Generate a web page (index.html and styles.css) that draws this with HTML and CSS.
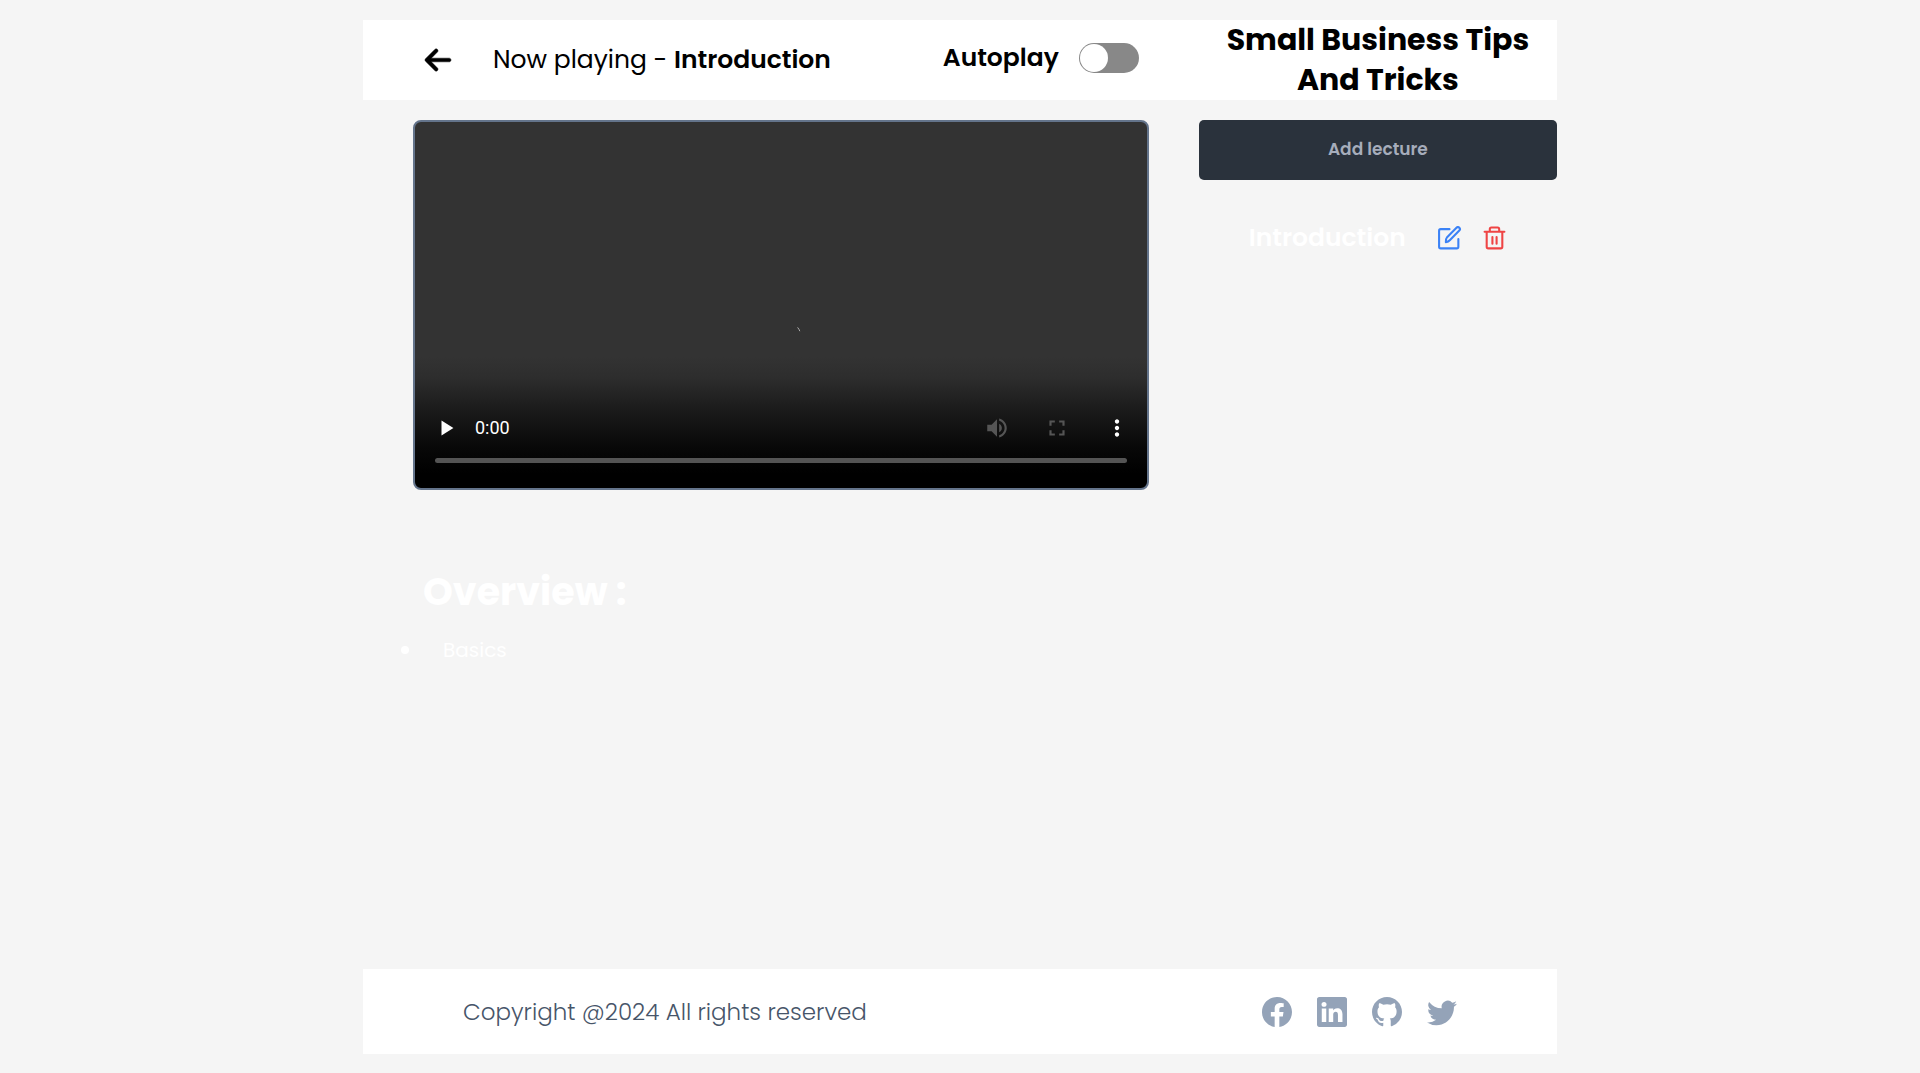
FILE: index.html
```html
<!DOCTYPE html>
<html lang="en">
<head>
<meta charset="utf-8">
<meta name="viewport" content="width=device-width, initial-scale=1">
<title>Small Business Tips And Tricks</title>
<link rel="stylesheet" href="styles.css">
</head>
<body>
<div class="page">
  <header class="header">
    <div class="header-main">
      <button class="icon-button back" type="button" aria-label="Back">
        <svg viewBox="0 0 448 512" width="26" height="30" fill="currentColor" stroke="currentColor" stroke-width="8" overflow="visible"><path d="M9.4 233.4c-12.5 12.5-12.5 32.8 0 45.3l160 160c12.5 12.5 32.8 12.5 45.3 0s12.5-32.8 0-45.3L109.2 288 416 288c17.7 0 32-14.3 32-32s-14.3-32-32-32l-306.7 0L214.6 118.6c12.5-12.5 12.5-32.8 0-45.3s-32.8-12.5-45.3 0l-160 160z"/></svg>
      </button>
      <p class="now-playing">Now playing - <strong>Introduction</strong></p>
      <div class="autoplay">
        <label for="autoplay">Autoplay</label>
        <input class="toggle" type="checkbox" id="autoplay">
      </div>
    </div>
    <h1 class="course-title">Small Business Tips And Tricks</h1>
  </header>

  <main class="content">
    <section class="lecture">
      <div class="player">
        <svg class="spinner" viewBox="0 0 4 5" width="4" height="5"><path d="M.6.4 2 2.4l.8 1.8" fill="none" stroke="#ccc" stroke-width=".8"/></svg>
        <div class="controls">
          <button class="icon-button" type="button" aria-label="Play">
            <svg viewBox="0 0 24 24" width="26" height="26" fill="currentColor"><path d="M6 5v14l11-7z"/></svg>
          </button>
          <span class="time">0:00</span>
          <button class="icon-button" type="button" aria-label="Mute" disabled>
            <svg viewBox="0 0 24 24" width="26" height="26" fill="currentColor"><path d="M3 9v6h4l5 5V4L7 9H3zm13.5 3c0-1.77-1.02-3.29-2.5-4.03v8.05c1.48-.73 2.5-2.25 2.5-4.02zM14 3.23v2.06c2.89.86 5 3.54 5 6.71s-2.11 5.85-5 6.71v2.06c4.01-.91 7-4.49 7-8.77s-2.99-7.86-7-8.77z"/></svg>
          </button>
          <button class="icon-button" type="button" aria-label="Full screen" disabled>
            <svg viewBox="0 0 24 24" width="26" height="26" fill="currentColor"><path d="M7 14H5v5h5v-2H7v-3zm-2-4h2V7h3V5H5v5zm12 7h-3v2h5v-5h-2v3zM14 5v2h3v3h2V5h-5z"/></svg>
          </button>
          <button class="icon-button" type="button" aria-label="More options">
            <svg viewBox="0 0 24 24" width="26" height="26" fill="currentColor"><path d="M12 8c1.1 0 2-.9 2-2s-.9-2-2-2-2 .9-2 2 .9 2 2 2zm0 2c-1.1 0-2 .9-2 2s.9 2 2 2 2-.9 2-2-.9-2-2-2zm0 6c-1.1 0-2 .9-2 2s.9 2 2 2 2-.9 2-2-.9-2-2-2z"/></svg>
          </button>
        </div>
        <input class="seek" type="range" min="0" max="100" value="0" aria-label="Seek" disabled>
      </div>
      <h2 class="overview-title">Overview :</h2>
      <ul class="overview-list">
        <li>Basics</li>
      </ul>
    </section>

    <aside class="lectures">
      <button class="add-lecture" type="button">Add lecture</button>
      <div class="lecture-row">
        <span class="lecture-name">Introduction</span>
        <button class="icon-button edit" type="button" aria-label="Edit lecture">
          <svg viewBox="0 0 24 24" width="25" height="25" fill="none" stroke="currentColor" stroke-width="2" stroke-linecap="round" stroke-linejoin="round"><path d="M12 3H3.500A1.500 1.500 0 0 0 2 4.500v15.500A1.500 1.500 0 0 0 3.500 21.500h15.500a1.500 1.500 0 0 0 1.500-1.500V12.500"/><path d="M8.500 15.500c0-2 0-3.500 1.200-4.800L18.700 1.700a1.900 1.900 0 0 1 2.700 2.700L12.500 13.500c-1.200 1.300-2.200 1.800-4 2z"/></svg>
        </button>
        <button class="icon-button delete" type="button" aria-label="Delete lecture">
          <svg viewBox="0 0 24 24" width="25" height="25" fill="none" stroke="currentColor" stroke-width="2" stroke-linecap="round" stroke-linejoin="round"><path d="M2.500 5.500h19M4.500 5.500v14.500A1.500 1.500 0 0 0 6 21.500h12a1.500 1.500 0 0 0 1.500-1.500V5.500M7.500 5.500V3A1.500 1.500 0 0 1 9 1.500h6a1.500 1.500 0 0 1 1.500 1.500V5.500M10 10.500v6.500M14 10.500v6.500"/></svg>
        </button>
      </div>
    </aside>
  </main>

  <footer class="footer">
    <p class="copyright">Copyright @2024 All rights reserved</p>
    <nav class="social" aria-label="Social">
      <a href="#" aria-label="Facebook"><svg viewBox="0 0 16 16" width="30" height="30" fill="currentColor"><path d="M16 8.049c0-4.446-3.582-8.050-8-8.050C3.580 0-.002 3.603-.002 8.050c0 4.017 2.926 7.347 6.750 7.951v-5.625h-2.030V8.050H6.750V6.275c0-2.017 1.195-3.131 3.022-3.131.876 0 1.791.157 1.791.157v1.980h-1.009c-.993 0-1.303.621-1.303 1.258v1.510h2.218l-.354 2.326H9.250V16c3.824-.604 6.750-3.934 6.750-7.951z"/></svg></a>
      <a href="#" aria-label="LinkedIn"><svg viewBox="0 0 16 16" width="30" height="30" fill="currentColor"><path d="M0 1.146C0 .513.526 0 1.175 0h13.650C15.474 0 16 .513 16 1.146v13.708c0 .633-.526 1.146-1.175 1.146H1.175C.526 16 0 15.487 0 14.854V1.146zm4.943 12.248V6.169H2.542v7.225h2.401zm-1.200-8.212c.837 0 1.358-.554 1.358-1.248-.015-.709-.520-1.248-1.342-1.248-.822 0-1.359.540-1.359 1.248 0 .694.521 1.248 1.327 1.248h.016zm4.908 8.212V9.359c0-.216.016-.432.080-.586.173-.431.568-.878 1.232-.878.869 0 1.216.662 1.216 1.634v3.865h2.401V9.250c0-2.220-1.184-3.252-2.764-3.252-1.274 0-1.845.700-2.165 1.193v.025h-.016a5.540 5.540 0 0 1 .016-.025V6.169h-2.400c.030.678 0 7.225 0 7.225h2.400z"/></svg></a>
      <a href="#" aria-label="GitHub"><svg viewBox="0 0 16 16" width="30" height="30" fill="currentColor"><path d="M8 0C3.580 0 0 3.580 0 8c0 3.540 2.290 6.530 5.470 7.590.400.070.550-.170.550-.380 0-.190-.010-.820-.010-1.490-2.010.370-2.530-.490-2.690-.940-.090-.230-.480-.940-.820-1.130-.280-.150-.680-.520-.010-.530.630-.010 1.080.580 1.230.820.720 1.210 1.870.870 2.330.660.070-.520.280-.870.510-1.070-1.780-.200-3.640-.890-3.640-3.950 0-.870.310-1.590.820-2.150-.080-.200-.360-1.020.080-2.120 0 0 .670-.210 2.200.820.640-.180 1.320-.270 2-.270.680 0 1.360.090 2 .270 1.530-1.040 2.200-.820 2.200-.820.440 1.100.160 1.920.080 2.120.510.560.820 1.270.820 2.150 0 3.070-1.870 3.750-3.650 3.950.290.250.540.730.540 1.480 0 1.070-.010 1.930-.010 2.200 0 .210.150.460.550.380A8.012 8.012 0 0 0 16 8c0-4.420-3.580-8-8-8z"/></svg></a>
      <a href="#" aria-label="Twitter"><svg viewBox="0 0 16 16" width="30" height="30" fill="currentColor"><path d="M5.026 15c6.038 0 9.341-5.003 9.341-9.334 0-.140 0-.282-.006-.422A6.685 6.685 0 0 0 16 3.542a6.658 6.658 0 0 1-1.889.518 3.301 3.301 0 0 0 1.447-1.817 6.533 6.533 0 0 1-2.087.793A3.286 3.286 0 0 0 7.875 6.030a9.325 9.325 0 0 1-6.767-3.429 3.289 3.289 0 0 0 1.018 4.382A3.323 3.323 0 0 1 .640 6.575v.045a3.288 3.288 0 0 0 2.632 3.218 3.203 3.203 0 0 1-.865.115 3.230 3.230 0 0 1-.614-.057 3.283 3.283 0 0 0 3.067 2.277A6.588 6.588 0 0 1 .780 13.580a6.320 6.320 0 0 1-.780-.045A9.344 9.344 0 0 0 5.026 15z"/></svg></a>
    </nav>
  </footer>
</div>
</body>
</html>
```
FILE: styles.css
```css
* {
  box-sizing: border-box;
}

body {
  margin: 0;
  background: #f5f5f5;
  color: #000;
  font-family: Poppins, Inter, sans-serif;
  font-size: 20px;
}

h1, h2, p, ul {
  margin: 0;
  padding: 0;
}

button {
  font: inherit;
}

.page {
  display: flex;
  flex-direction: column;
  width: 100%;
  max-width: 1234px;
  min-height: 100vh;
  margin: 0 auto;
  padding: 20px 20px 19px;
}

.icon-button {
  display: flex;
  padding: 0;
  border: 0;
  background: none;
  color: inherit;
}

.header,
.content {
  display: grid;
  grid-template-columns: 7fr 3fr;
}

.header {
  align-items: center;
  min-height: 80px;
  background: #fff;
}

.header-main {
  display: flex;
  align-items: center;
  padding: 0 60px 0 62px;
  font-size: 25px;
}

.now-playing {
  margin-left: 42px;
}

.now-playing strong {
  font-weight: 600;
}

.autoplay {
  display: flex;
  align-items: center;
  gap: 20px;
  margin-left: auto;
  padding-bottom: 4px;
  font-weight: 600;
}

.toggle {
  appearance: none;
  width: 60px;
  height: 30px;
  margin: 0;
  padding: 1px;
  border-radius: 15px;
  background: #888;
}

.toggle::before {
  content: "";
  display: block;
  width: 28px;
  height: 28px;
  border-radius: 50%;
  background: #fff;
}

.toggle:checked::before {
  margin-left: auto;
}

.course-title {
  padding: 0 20px;
  font-size: 30px;
  font-weight: 700;
  line-height: 40px;
  text-align: center;
}

.content {
  padding-top: 20px;
}

.lecture {
  padding: 0 50px;
  color: #fff;
}

.player {
  position: relative;
  display: flex;
  flex-direction: column;
  justify-content: flex-end;
  aspect-ratio: 736 / 370;
  padding: 0 20px 25px;
  border: 2px solid #64748b;
  border-radius: 8px;
  background: linear-gradient(#333 64%, #2d2d2d 70%, #1c1c1c 78%, #080808 89%, #000 96%);
}

.spinner {
  position: absolute;
  top: 56%;
  left: 52%;
  margin-left: 1px;
}

.controls {
  display: flex;
  align-items: center;
  gap: 34px;
  padding-bottom: 17px;
}

.controls .icon-button:disabled {
  color: #555;
}

.controls .icon-button:last-child {
  margin-right: -3px;
}

.time {
  margin: 0 auto 0 -20px;
  font: 18px/26px Roboto, sans-serif;
}

.seek {
  appearance: none;
  width: 100%;
  height: 5px;
  margin: 0;
  border-radius: 3px;
  background: #545454;
}

.seek::-webkit-slider-thumb {
  appearance: none;
  width: 0;
  height: 0;
}

.overview-title {
  margin: 77px 0 0 10px;
  font-size: 38px;
  font-weight: 700;
  line-height: 50px;
}

.overview-list {
  margin-top: 16px;
  list-style: none;
}

.overview-list li {
  display: flex;
  align-items: center;
  gap: 34px;
  margin-left: -12px;
  font-size: 20px;
  line-height: 34px;
}

.overview-list li::before {
  content: "";
  width: 8px;
  height: 8px;
  border-radius: 50%;
  background: #fff;
}

.add-lecture {
  width: 100%;
  height: 60px;
  padding: 0 0 2px;
  border: 0;
  border-radius: 5px;
  background: #2a323c;
  color: #a6adbb;
  font-size: 17px;
  font-weight: 600;
}

.lecture-row {
  display: flex;
  align-items: center;
  gap: 20px;
  padding: 38px 50px;
  color: #fff;
  line-height: 40px;
}

.lecture-name {
  margin-right: auto;
  font-size: 25px;
  font-weight: 600;
}

.edit {
  color: #3b82f6;
}

.delete {
  color: #ef4444;
}

.footer {
  display: flex;
  align-items: center;
  justify-content: space-between;
  min-height: 85px;
  margin-top: auto;
  padding: 0 100px;
  background: #fff;
  color: #475569;
}

.copyright {
  font-size: 23px;
  font-weight: 300;
}

.social {
  display: flex;
  gap: 25px;
}

.social a {
  display: flex;
  color: #94a3b8;
}
```
